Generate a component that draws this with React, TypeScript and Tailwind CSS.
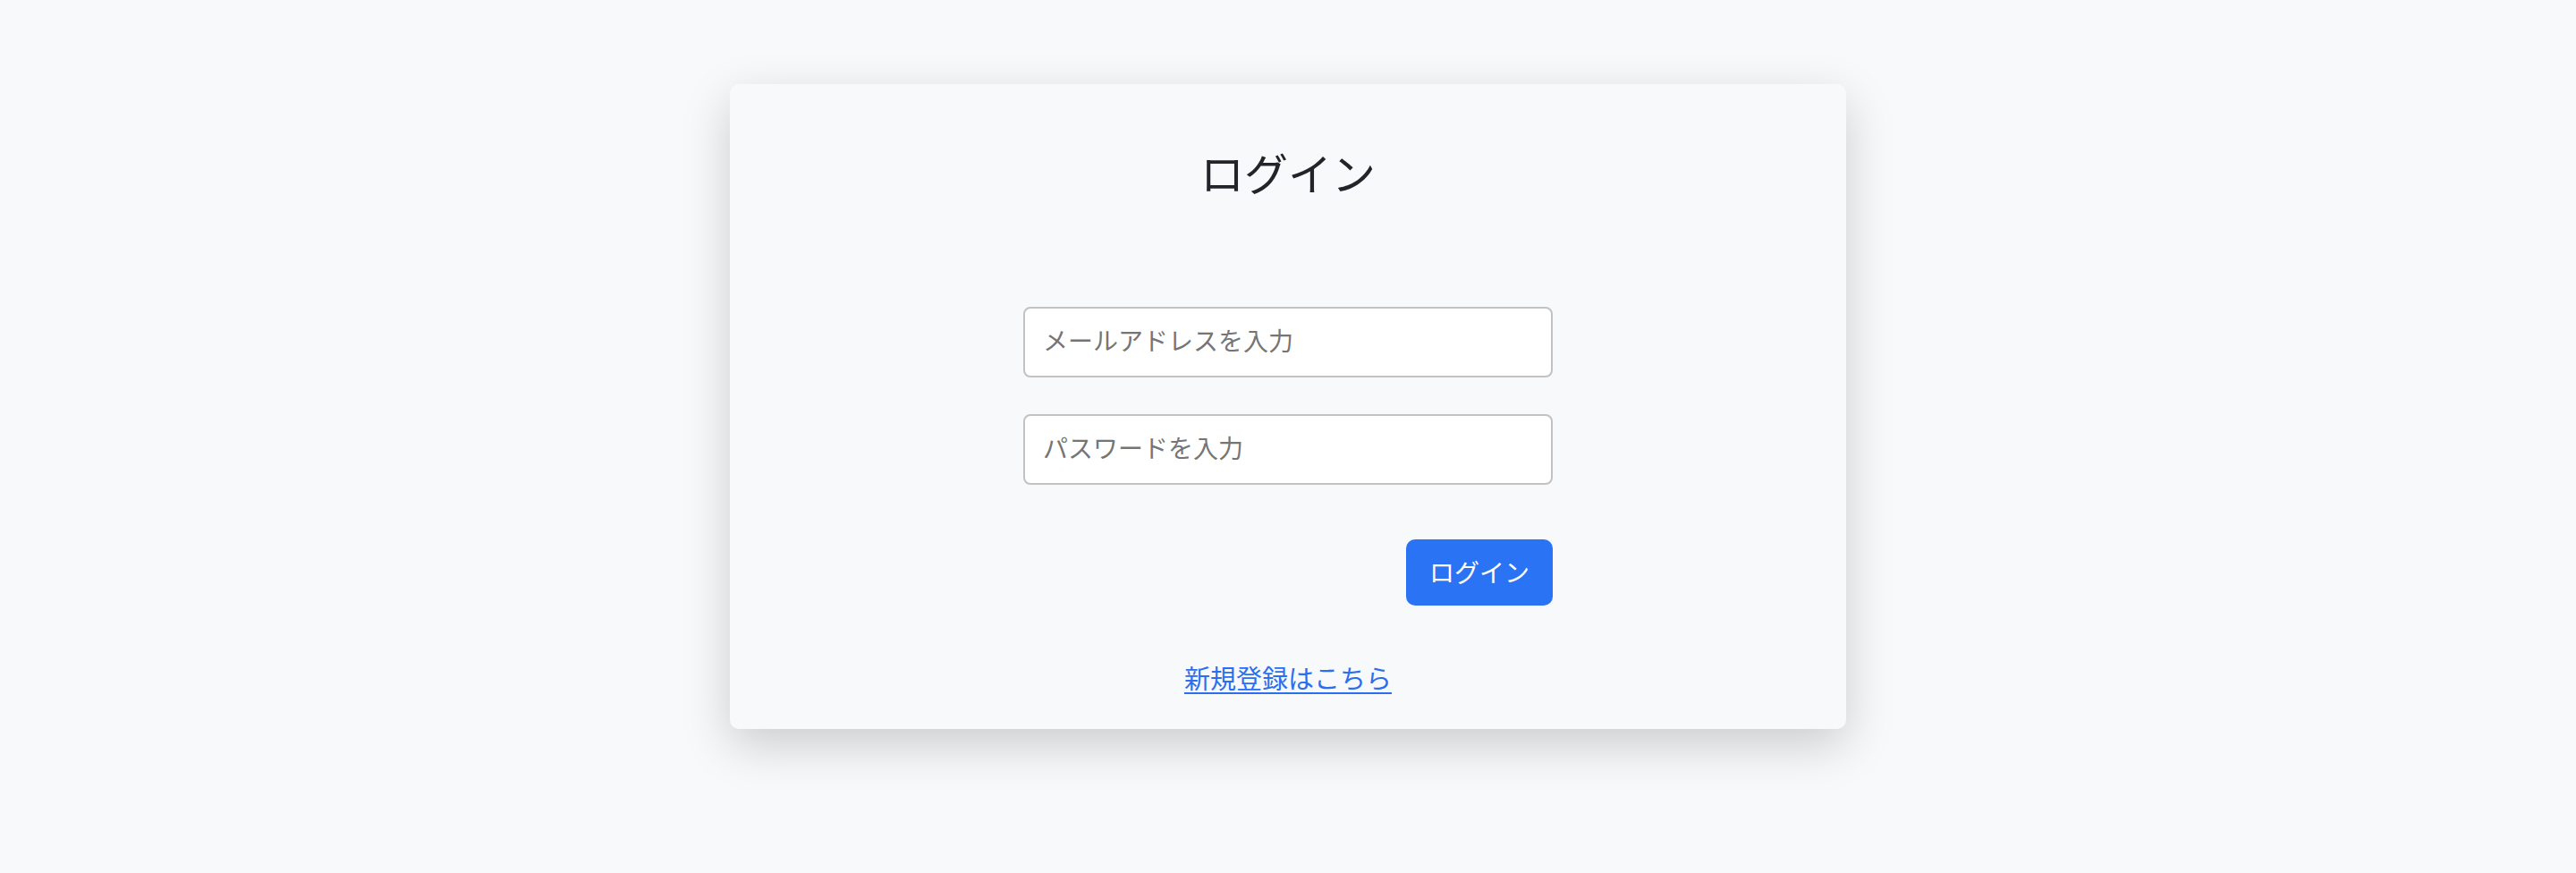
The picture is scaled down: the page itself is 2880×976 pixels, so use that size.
import React, { useState } from "react";

const font = "font-['Noto_Sans_CJK_JP','Noto_Sans',sans-serif]";

export default function App() {
  const [email, setEmail] = useState("");
  const [password, setPassword] = useState("");

  return (
    <div className={`min-h-[976px] w-full bg-[#f8f9fb] ${font}`}>
      <div className="flex justify-center pt-[94px]">
        {/* Login card */}
        <div className="flex w-[1248px] flex-col items-center rounded-[10px] bg-[#f8f9fa] pt-[69px] pb-[37px] shadow-[0_18px_54px_rgba(0,0,0,0.18)]">
          <h2 className="text-[49px] leading-[58px] font-normal text-[#212529]">
            ログイン
          </h2>

          <form
            className="mt-[122px] flex w-[592px] flex-col"
            onSubmit={(e) => e.preventDefault()}
          >
            <input
              type="email"
              value={email}
              onChange={(e) => setEmail(e.target.value)}
              placeholder="メールアドレスを入力"
              className="h-[79px] w-full rounded-[8px] border-2 border-[#c2c2c2] bg-white px-[20px] pb-[5px] text-[28px] text-[#212529] outline-none placeholder:text-[#757575]"
            />
            <input
              type="password"
              value={password}
              onChange={(e) => setPassword(e.target.value)}
              placeholder="パスワードを入力"
              className="mt-[41px] h-[79px] w-full rounded-[8px] border-2 border-[#c2c2c2] bg-white px-[20px] pb-[5px] text-[28px] text-[#212529] outline-none placeholder:text-[#757575]"
            />
            <div className="mt-[61px] flex justify-end">
              <button
                type="submit"
                className="h-[74px] w-[164px] rounded-[10px] bg-[#2a73f5] pb-[3px] text-[28px] text-white"
              >
                ログイン
              </button>
            </div>
          </form>

          <a
            href="#"
            className="mt-[59px] text-[29px] leading-[42px] text-[#2a6ff0] underline decoration-2 underline-offset-[4px]"
          >
            新規登録はこちら
          </a>
        </div>
      </div>
    </div>
  );
}
